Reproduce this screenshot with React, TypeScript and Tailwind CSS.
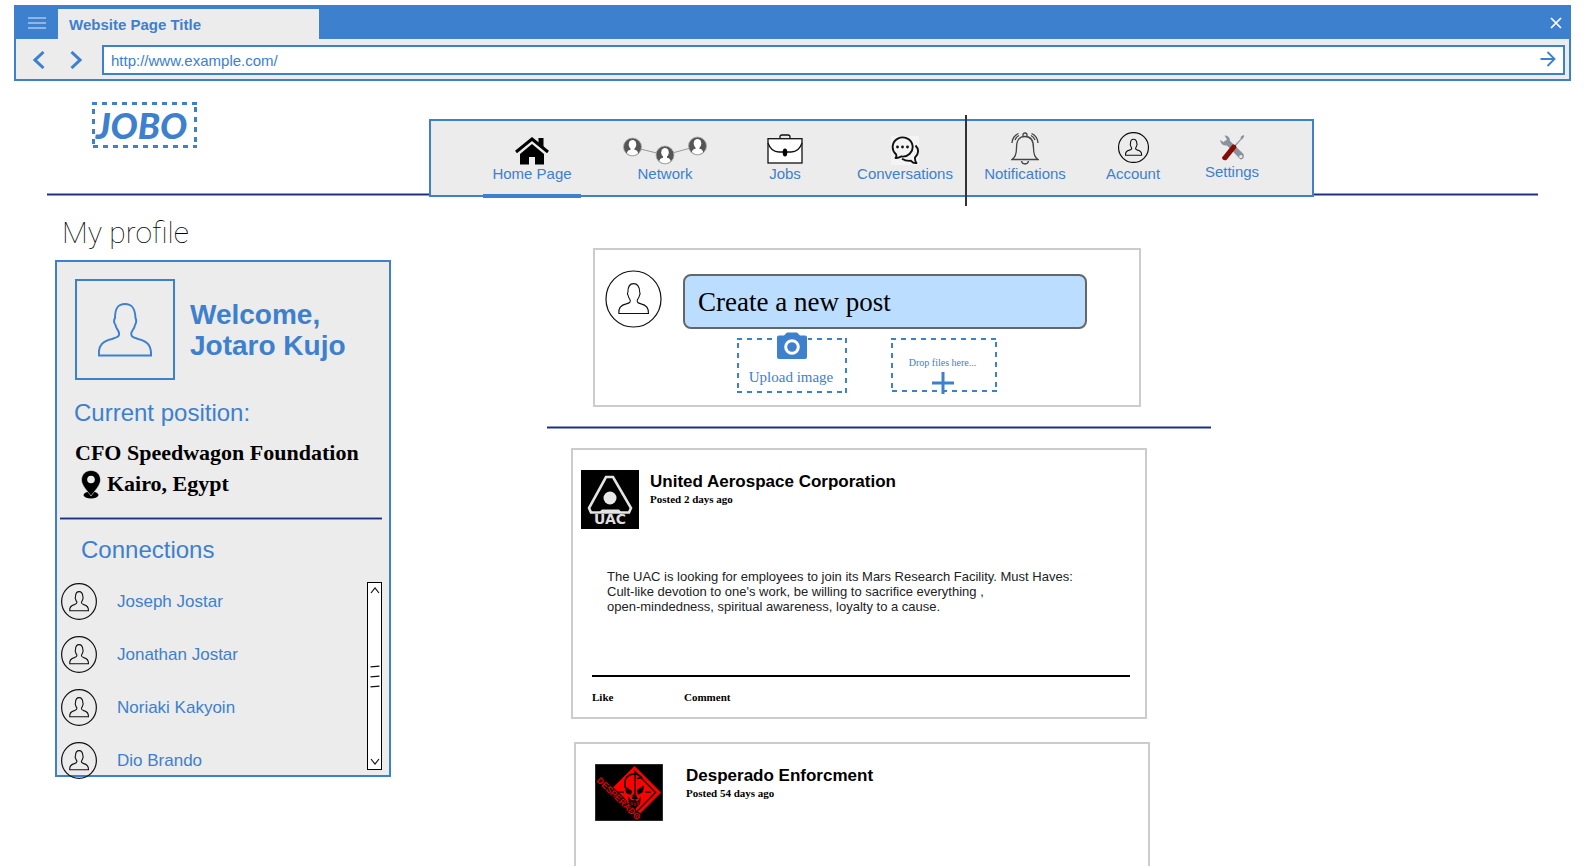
import React from 'react';
import type { ReactNode } from 'react';

const PERSON =
  'M1 52.500C0 42 5 38 14 36C20 34 21.500 33.500 21 30C20.500 27 18 26 17.500 22C16 20 15.800 17 17 15C17 5 20 1 27 1C34 1 37 5 37.500 15C38.500 17 38.200 20 37 22C36.500 26 34 27 33.300 30C33 33.500 34 34 40 36C49 38 53.500 42 53 52.500Z';

function PersonIcon({ className = '' }: { className?: string }) {
  return (
    <svg viewBox="0 0 54 54" className={className} fill="none" stroke="currentColor" strokeWidth="2" aria-hidden="true">
      <path d={PERSON} />
    </svg>
  );
}

function CircleAvatar({ className = '' }: { className?: string }) {
  return (
    <svg viewBox="0 0 58 58" preserveAspectRatio="none" className={className} fill="none" stroke="#111" aria-hidden="true">
      <ellipse cx="29" cy="29" rx="28" ry="28" vectorEffect="non-scaling-stroke" strokeWidth="1.2" />
      <g transform="translate(13.500 13) scale(0.580)">
        <path d={PERSON} vectorEffect="non-scaling-stroke" strokeWidth="1.1" />
      </g>
    </svg>
  );
}

function HomeIcon() {
  return (
    <svg width="34" height="28" viewBox="0 0 34 28" aria-hidden="true">
      <path d="M5 17L17 7L29 17V27.500H20V20H14V27.500H5Z" fill="#000" />
      <path d="M23.500 1H28.500V11L23.500 6.500Z" fill="#000" />
      <path d="M1 15L17 2L33 15" fill="none" stroke="#000" strokeWidth="3" />
    </svg>
  );
}

function Node({ x, y, id }: { x: number; y: number; id: string }) {
  return (
    <g transform={`translate(${x} ${y})`}>
      <clipPath id={id}>
        <circle r="8.500" />
      </clipPath>
      <circle r="9" fill="#555" stroke="#aaa" strokeWidth="0.800" />
      <g clipPath={`url(#${id})`} fill="#fff">
        <ellipse cy="-2.500" rx="3.800" ry="4.600" />
        <path d="M-2 0H2V3C5 3 6 5 6 10H-6C-6 5 -5 3 -2 3Z" />
      </g>
    </g>
  );
}

function NetworkIcon() {
  return (
    <svg width="84" height="29" viewBox="0 0 84 29" aria-hidden="true">
      <path d="M9 11L42 19L75 10" fill="none" stroke="#999" />
      <Node x={9.5} y={11} id="node-a" />
      <Node x={42} y={19} id="node-b" />
      <Node x={74.5} y={10} id="node-c" />
    </svg>
  );
}

function JobsIcon() {
  return (
    <svg width="36" height="30" viewBox="0 0 36 30" fill="none" stroke="#111" strokeWidth="1.300" aria-hidden="true">
      <path d="M13 4.500V3Q13 1 15 1H21Q23 1 23 3V4.500" />
      <rect x="1" y="4.700" width="34" height="24.300" fill="#fff" />
      <path d="M1 9Q4 18 12 18H24Q32 18 35 9" />
      <ellipse cx="18" cy="18.500" rx="2.300" ry="4" fill="#000" stroke="none" />
    </svg>
  );
}

function ChatIcon() {
  return (
    <svg width="28" height="29" viewBox="0 0 28 29" fill="none" stroke="#111" strokeWidth="1.900" strokeLinejoin="round" aria-hidden="true">
      <rect width="28" height="29" fill="#f4f4f4" stroke="none" />
      <path d="M5 18.200A10 9.600 0 1 1 10 20.500C8.500 21.500 7 22.300 4.500 22C5.500 21 5.500 19.500 5 18.200Z" />
      <path d="M24.500 9.500C28 13 28 18 24 21.500C23.800 23.500 24.300 25.500 25.500 27C23 27.500 21 26 20 24.800C16 25.200 13.500 24.500 11 22.800" />
      <g fill="#111" stroke="none">
        <circle cx="6.500" cy="11" r="1.400" />
        <circle cx="11.500" cy="11" r="1.400" />
        <circle cx="16.500" cy="11" r="1.400" />
      </g>
    </svg>
  );
}

function BellIcon() {
  return (
    <svg width="28" height="33" viewBox="0 0 28 33" fill="none" stroke="#444" strokeWidth="1.300" aria-hidden="true">
      <path d="M1 27.500C5 25 5.500 21 5.500 16C5.500 8 8 4.500 14 4.500C20 4.500 22.500 8 22.500 16C22.500 21 23 25 27 27.500Z" />
      <path d="M12 4V3Q12 1 14 1T16 3V4M10.500 29Q11 32 14 32T17.500 29" />
      <path d="M1 11Q1.500 4 7.500 1.500M4 8Q5 5 8 3.500M27 11Q26.500 4 20.500 1.500M24 8Q23 5 20 3.500" />
    </svg>
  );
}

function ToolsIcon() {
  return (
    <svg width="26" height="27" viewBox="0 0 26 27" aria-hidden="true">
      <path d="M5.500 1.500Q11 1.500 11 7L24.500 20Q26 25 21.500 25.500L8 11.500Q2 12 1 6L4.500 8L8 5.500Z" fill="#8a929c" />
      <circle cx="21.800" cy="22.500" r="1.600" fill="#ececec" />
      <path d="M14 13L21.500 5L22 2.500L24.500 1L25.300 2L24 4.500L22 6L15 14Z" fill="#8a929c" />
      <path d="M13.500 10.500Q17 10 17.500 13.500L7.500 26Q3.500 27 3 23.500Z" fill="#850c05" />
    </svg>
  );
}

function PinIcon() {
  return (
    <svg width="20" height="29" viewBox="0 0 20 29" className="mt-px" aria-hidden="true">
      <ellipse cx="10" cy="25" rx="7.500" ry="3.500" fill="#000" />
      <path d="M10 0.500C15.500 0.500 19.500 4.500 19.500 10C19.500 15.500 13.500 21 10 26C6.500 21 0.500 15.500 0.500 10C0.500 4.500 4.500 0.500 10 0.500Z" fill="#000" stroke="#ececec" strokeWidth="0.600" />
      <circle cx="10" cy="9.500" r="3.800" fill="#ececec" />
    </svg>
  );
}

function CameraIcon({ className = '' }: { className?: string }) {
  return (
    <svg width="32" height="28" viewBox="0 0 32 28" className={className} aria-hidden="true">
      <path d="M3 3.500H8L11 0.500H21L24 3.500H29Q31 3.500 31 5.500V25Q31 27 29 27H3Q1 27 1 25V5.500Q1 3.500 3 3.500Z" fill="#3d80cd" />
      <circle cx="16" cy="15" r="6.300" fill="#3d80cd" stroke="#fff" strokeWidth="3" />
    </svg>
  );
}

function UacLogo() {
  return (
    <svg width="58" height="59" viewBox="0 0 58 59" className="shrink-0" role="img" aria-label="UAC">
      <rect width="58" height="59" fill="#000" />
      <path d="M25 7H32L50 38L48 42.500H10L8 38Z" fill="none" stroke="#e4e4e4" strokeWidth="2.600" />
      <path d="M17 43L21 39.500H38L41 43Z" fill="#e4e4e4" />
      <circle cx="29" cy="28" r="6.500" fill="#e8e8e8" />
      <text x="29" y="54" textAnchor="middle" fontSize="14" fontWeight="bold" fontFamily="DejaVu Sans, sans-serif" fill="#ddd">
        UAC
      </text>
    </svg>
  );
}

function DesperadoLogo() {
  return (
    <svg width="68" height="57" viewBox="0 0 68 57" className="shrink-0" role="img" aria-label="Desperado">
      <rect width="68" height="57" fill="#000" stroke="#555" />
      <path d="M39.500 2L66 28.500L39.500 55L13 28.500Z" fill="#f00" />
      <path d="M40 7.500L60.500 28.500L40 49.500Z" fill="none" stroke="#000" strokeWidth="1.300" />
      <path d="M32 13Q35 10 39 10Q44 10 47 14Q45 13 42 15M32 13Q29 17 30 24" fill="none" stroke="#000" strokeWidth="1.500" />
      <path d="M30 22L37 27L36 31L31 29ZM49 21L42 26L43 31L48 28ZM38 30L41 31L43 35H37ZM33 32L36 36L43 37L46 32L45 40L41 44H37L34 40Z" fill="#000" />
      <path d="M37 38V41M40 38.500V42M43 38V41" stroke="#f00" />
      <path d="M22 28H29M50 28H56" stroke="#000" strokeWidth="1.600" />
      <g transform="translate(1 17) rotate(44)">
        <rect x="14" y="-1" width="40" height="1.500" fill="#000" />
        <text fontSize="9" fontWeight="bold" fontFamily="Liberation Sans, Arial, sans-serif" fill="#e00000" stroke="#000" strokeWidth="2" paintOrder="stroke">
          DESPERADO
        </text>
      </g>
    </svg>
  );
}

function DashedFrame({ weight }: { weight: number }) {
  return (
    <svg className="absolute inset-0 h-full w-full" aria-hidden="true">
      <rect width="100%" height="100%" fill="none" stroke="#3d80cd" strokeWidth={weight * 2} strokeDasharray="5 5" />
    </svg>
  );
}

function Rule({ className = '' }: { className?: string }) {
  return <div className={`h-[3px] border-y border-[#8e9ac4] bg-[#1a2f80] ${className}`} />;
}

function NavItem({ icon, label, className, active }: { icon: ReactNode; label: string; className: string; active?: boolean }) {
  return (
    <a
      href="#"
      aria-current={active ? 'page' : undefined}
      className={`relative flex h-full shrink-0 flex-col items-center text-[15px] leading-[18px] whitespace-nowrap text-[#3d80cd] ${className}`}
    >
      <span className="flex h-11 items-end">{icon}</span>
      <span>{label}</span>
      {active && <span className="absolute inset-x-0 -bottom-[3px] h-1 bg-[#3d80cd]" />}
    </a>
  );
}

function BrowserBar() {
  return (
    <div className="mr-[13px] ml-[14px] border-2 border-[#3d80cd] bg-[#ececec] text-[#3d80cd]">
      <div className="flex h-8 items-stretch bg-[#3d80cd]">
        <button type="button" aria-label="Menu" className="flex w-[42px] items-center justify-center pb-px">
          <svg width="18" height="12" viewBox="0 0 18 12" stroke="#a9c8ea" strokeWidth="1.500" aria-hidden="true">
            <path d="M0 1H18M0 6H18M0 11H18" />
          </svg>
        </button>
        <div className="mt-[2px] flex w-[261px] items-center bg-[#ececec] px-[11px] pt-px text-[15px] leading-[18px] font-bold">Website Page Title</div>
        <button type="button" aria-label="Close" className="ml-auto flex w-[19px] items-center pb-px">
          <svg width="12" height="12" viewBox="0 0 12 12" stroke="#fff" strokeWidth="1.700" aria-hidden="true">
            <path d="M1 1L11 11M11 1L1 11" />
          </svg>
        </button>
      </div>
      <div className="flex items-center pt-[6px] pr-1 pb-1">
        <button type="button" aria-label="Back" className="ml-[17px] flex w-3 justify-center">
          <svg width="12" height="18" viewBox="0 0 12 18" fill="none" stroke="currentColor" strokeWidth="3" aria-hidden="true">
            <path d="M10.500 1L2 9L10.500 17" />
          </svg>
        </button>
        <button type="button" aria-label="Forward" className="mr-5 ml-[25px] flex w-3 justify-center">
          <svg width="12" height="18" viewBox="0 0 12 18" fill="none" stroke="currentColor" strokeWidth="3" aria-hidden="true">
            <path d="M1.500 1L10 9L1.500 17" />
          </svg>
        </button>
        <div className="flex h-[30px] flex-1 items-center border-2 border-[#3d80cd] bg-white">
          <input
            type="text"
            aria-label="Address"
            defaultValue="http://www.example.com/"
            className="min-w-0 flex-1 bg-transparent px-[7px] pt-px text-[15px] leading-[18px] outline-none"
          />
          <button type="button" aria-label="Go" className="mr-[7px] pb-[2px]">
            <svg width="16" height="16" viewBox="0 0 16 16" className="block" fill="none" stroke="currentColor" strokeWidth="1.900" aria-hidden="true">
              <path d="M0.500 8H14M7.500 1L14.500 8L7.500 15" />
            </svg>
          </button>
        </div>
      </div>
    </div>
  );
}

function Header() {
  return (
    <header className="mt-[21px] mr-[46px] ml-[47px] flex items-end">
      <div className="mb-px flex h-[94px] w-[382px] shrink-0 flex-col items-start justify-between">
        <a
          href="#"
          className="relative ml-[45px] flex h-[46px] w-[105px] items-center justify-center pr-[6px] font-['Lato',sans-serif] text-[36px] leading-10 font-black text-[#3d80cd] italic"
        >
          <DashedFrame weight={3} />
          JOBO
        </a>
        <Rule className="w-full" />
      </div>
      <nav className="flex h-[78px] w-[885px] shrink-0 border-2 border-[#3d80cd] bg-[#ececec]">
        <div className="ml-[52px] flex gap-[30px]">
          <NavItem active className="w-[98px]" label="Home Page" icon={<HomeIcon />} />
          <NavItem className="w-[108px]" label="Network" icon={<NetworkIcon />} />
          <NavItem className="w-[72px]" label="Jobs" icon={<span className="pb-px"><JobsIcon /></span>} />
          <NavItem className="w-[108px]" label="Conversations" icon={<ChatIcon />} />
        </div>
        <div className="-mt-[6px] -mb-[11px] ml-[6px] w-[2px] shrink-0 bg-[#333]" />
        <div className="ml-[17px] flex gap-[30px]">
          <NavItem className="w-[82px]" label="Notifications" icon={<BellIcon />} />
          <NavItem className="w-[74px]" label="Account" icon={<span className="pb-[2px]"><CircleAvatar className="h-[31px] w-[31px]" /></span>} />
          <NavItem className="-mt-[2px] w-[64px]" label="Settings" icon={<span className="pb-[2px]"><ToolsIcon /></span>} />
        </div>
      </nav>
      <Rule className="mb-px flex-1" />
    </header>
  );
}

function Sidebar() {
  const people = ['Joseph Jostar', 'Jonathan Jostar', 'Noriaki Kakyoin', 'Dio Brando'];
  return (
    <aside className="pt-4">
      <h2 className="mb-[7px] ml-[7px] font-['Roboto',sans-serif] text-[30px] leading-10 font-thin text-black">My profile</h2>
      <div className="border-2 border-[#3d80cd] bg-[#ececec] pt-[17px]">
        <div className="ml-[18px] flex items-center gap-[15px]">
          <div className="flex h-[101px] w-[100px] items-center justify-center border-2 border-[#3d80cd] text-[#3d80cd]">
            <PersonIcon className="h-[54px] w-[54px]" />
          </div>
          <p className="text-[28px] leading-[31px] font-bold text-[#3d80cd]">
            Welcome,
            <br />
            Jotaro Kujo
          </p>
        </div>
        <h3 className="mt-[19px] ml-[17px] text-2xl leading-7 text-[#3d80cd]">Current position:</h3>
        <div className="mt-[10px] ml-[18px] font-['Liberation_Serif',serif] text-[22px] leading-[31px] font-bold text-black">
          <p className="whitespace-nowrap">CFO Speedwagon Foundation</p>
          <p className="flex items-center gap-[6px] pl-[6px]">
            <PinIcon />
            Kairo, Egypt
          </p>
        </div>
        <Rule className="mt-[18px] mr-[7px] ml-[3px]" />
        <h3 className="mt-4 ml-6 text-2xl leading-7 text-[#3d80cd]">Connections</h3>
        <div className="mt-[18px] mr-[7px] -mb-1 ml-1 flex justify-between">
          <ul className="flex flex-col gap-4 pt-px">
            {people.map((name) => (
              <li key={name}>
                <a href="#" className="flex h-[37px] items-center gap-5 text-[17px] leading-5 text-[#3d80cd]">
                  <CircleAvatar className="h-[37px] w-9" />
                  {name}
                </a>
              </li>
            ))}
          </ul>
          <div className="flex h-[188px] w-[15px] flex-col items-center justify-between border border-black bg-white py-1">
            <button type="button" aria-label="Scroll up">
              <svg width="10" height="7" viewBox="0 0 10 7" className="block" fill="none" stroke="#111" strokeWidth="1.200" aria-hidden="true">
                <path d="M1 6L5 1L9 6" />
              </svg>
            </button>
            <svg width="10" height="23" viewBox="0 0 10 23" stroke="#111" strokeWidth="1.300" aria-hidden="true">
              <path d="M0.500 1.800L9.500 1.200M0.500 11.800L9.500 11.200M0.500 21.800L9.500 21.200" />
            </svg>
            <button type="button" aria-label="Scroll down">
              <svg width="10" height="7" viewBox="0 0 10 7" className="block" fill="none" stroke="#111" strokeWidth="1.200" aria-hidden="true">
                <path d="M1 1L5 6L9 1" />
              </svg>
            </button>
          </div>
        </div>
      </div>
    </aside>
  );
}

function Composer() {
  return (
    <form className="mr-[70px] ml-[46px] flex h-[159px] items-start border-2 border-[#ccc] pt-5 pl-[10px]">
      <CircleAvatar className="h-[58px] w-[57px] shrink-0" />
      <div className="mt-1 ml-[21px] flex w-[404px] flex-col font-['Liberation_Serif',serif]">
        <input
          type="text"
          aria-label="Create a new post"
          placeholder="Create a new post"
          className="h-[55px] w-full rounded-lg border-2 border-[#666] bg-[#bbddff] px-[13px] pt-[2px] text-[27px] leading-8 text-black outline-none placeholder:text-black placeholder:opacity-100"
        />
        <div className="mt-[9px] ml-[54px] flex items-start gap-[44px] text-[#3d80cd]">
          <button type="button" className="relative flex h-[55px] w-[110px] items-end justify-center pr-[2px] pb-[7px] text-[15px] leading-[18px]">
            <DashedFrame weight={2} />
            <CameraIcon className="absolute -top-[6px] left-[39px] bg-white" />
            Upload image
          </button>
          <button type="button" className="relative flex h-[54px] w-[106px] items-start justify-center pt-[19px] pr-[3px] text-[10px] leading-3">
            <DashedFrame weight={2} />
            Drop files here...
            <svg width="22" height="22" viewBox="0 0 22 22" className="absolute -bottom-[2px] left-[41px]" stroke="currentColor" strokeWidth="3" aria-hidden="true">
              <path d="M0 11H22M11 0V22" />
            </svg>
          </button>
        </div>
      </div>
    </form>
  );
}

function PostHead({ logo, name, age, className }: { logo: ReactNode; name: string; age: string; className: string }) {
  return (
    <div className={`flex items-start ${className}`}>
      {logo}
      <div className="pt-[2px]">
        <h3 className="text-[17px] leading-5 font-bold text-black">{name}</h3>
        <p className="font-['Liberation_Serif',serif] text-[11px] leading-[14px] font-bold text-black">{age}</p>
      </div>
    </div>
  );
}

function Feed() {
  return (
    <main className="min-w-0 pt-[51px]">
      <Composer />
      <Rule className="mt-[19px]" />
      <article className="mt-[19px] mr-[64px] ml-6 border-2 border-[#ccc] pt-5 pb-[13px]">
        <PostHead className="gap-[11px] pl-2" logo={<UacLogo />} name="United Aerospace Corporation" age="Posted 2 days ago" />
        <p className="mt-10 ml-[34px] text-[13px] leading-[15px] text-[#222]">
          The UAC is looking for employees to join its Mars Research Facility. Must Haves:
          <br />
          Cult-like devotion to one's work, be willing to sacrifice everything ,
          <br />
          open-mindedness, spiritual awareness, loyalty to a cause.
        </p>
        <div className="mt-[61px] mr-[15px] ml-[19px] border-t-2 border-black pt-[13px] font-['Liberation_Serif',serif] text-[11px] leading-[14px] text-black">
          <div className="flex">
            <button type="button" className="w-[92px] text-left font-bold">Like</button>
            <button type="button" className="font-bold">Comment</button>
          </div>
        </div>
      </article>
      <article className="mt-[23px] mr-[61px] ml-[27px] h-[271px] border-2 border-[#ccc] pt-5">
        <PostHead className="gap-[23px] pl-[19px]" logo={<DesperadoLogo />} name="Desperado Enforcment" age="Posted 54 days ago" />
      </article>
    </main>
  );
}

export default function App() {
  return (
    <div className="h-screen overflow-hidden bg-white pt-[5px] font-['Liberation_Sans',Arial,sans-serif]">
      <BrowserBar />
      <Header />
      <div className="ml-[55px] grid grid-cols-[336px_minmax(0,664px)] gap-[156px]">
        <Sidebar />
        <Feed />
      </div>
    </div>
  );
}
